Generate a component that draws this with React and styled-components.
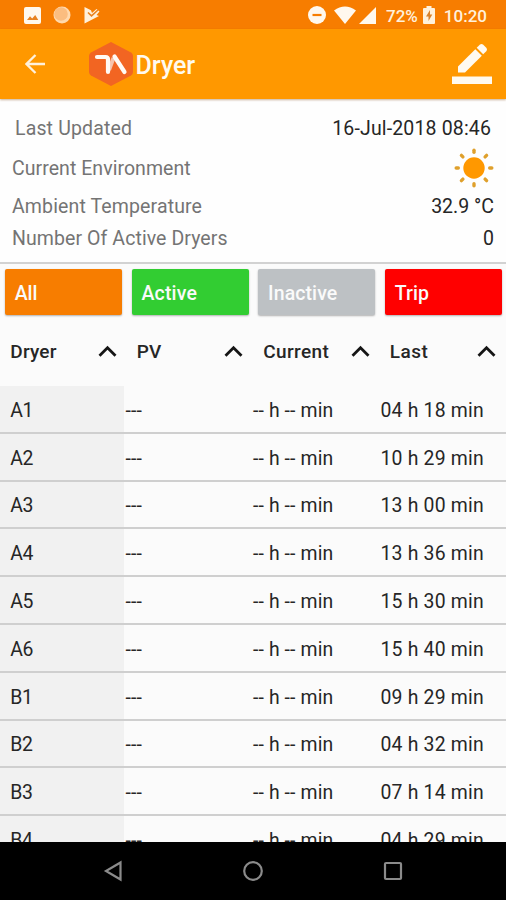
import React from "react";
import styled, { createGlobalStyle } from "styled-components";

const GlobalStyle = createGlobalStyle`
  * { box-sizing: border-box; }
  body { margin: 0; background: #fafafa; font-family: Roboto, "Liberation Sans", sans-serif; }
`;

const Screen = styled.div`
  width: 506px;
  height: 900px;
  display: flex;
  flex-direction: column;
  overflow: hidden;
  background: #fbfbfb;
  color: #262626;
`;

const StatusBar = styled.div`
  height: 29px;
  flex: none;
  display: flex;
  align-items: center;
  justify-content: space-between;
  padding: 1px 19px 0 24px;
  background: #f77d00;
  color: #fff1dc;
`;

const Group = styled.div`
  display: flex;
  align-items: center;
`;

const Icon = styled.svg`
  display: block;
  flex: none;
  margin-left: ${(p) => p.$gap || 0}px;
`;

const StatusText = styled.span`
  font-size: 17px;
  line-height: 20px;
  font-weight: 500;
  margin-top: 1px;
  margin-left: ${(p) => p.$gap}px;
`;

const AppBar = styled.header`
  height: 70px;
  flex: none;
  display: flex;
  align-items: center;
  padding: 0 14px 0 25px;
  background: #ff9800;
  box-shadow: 0 1px 2px rgba(120, 60, 0, 0.4);
  position: relative;
`;

const Title = styled.h1`
  margin: 3px auto 0 2px;
  font-size: 25px;
  font-weight: 500;
  line-height: 30px;
  letter-spacing: 0;
  color: #fffaf0;
`;

const Summary = styled.section`
  height: 165px;
  flex: none;
  display: grid;
  grid-template-rows: 47px 32px 44px 20px;
  padding: 6px 12px 0;
  background: #fefefe;
  border-bottom: 2px solid #d2d2d2;
  font-size: 19.5px;
`;

const SummaryRow = styled.div`
  display: flex;
  align-items: center;
  justify-content: space-between;
  padding: 0 ${(p) => (p.$inset ? 3 : 0)}px;
`;

const Label = styled.span`
  color: #747474;
  letter-spacing: ${(p) => p.$spacing}px;
`;

const Value = styled.span`
  letter-spacing: ${(p) => p.$spacing}px;
`;

const Filters = styled.nav`
  flex: none;
  display: grid;
  grid-template-columns: repeat(4, 117px);
  column-gap: 9.7px;
  padding: 5px 5px 0;
`;

const FilterButton = styled.button`
  height: 46px;
  border: 0;
  border-radius: 2px;
  padding: 2px 0 0 9.7px;
  text-align: left;
  font: 500 19.5px Roboto, "Liberation Sans", sans-serif;
  letter-spacing: ${(p) => p.$spacing}px;
  color: #fafafa;
  background: ${(p) => p.$color};
  box-shadow: 0 1px 2px rgba(0, 0, 0, 0.3);
`;

const Headings = styled.div`
  height: 71px;
  flex: none;
  display: grid;
  grid-template-columns: repeat(4, 126.5px);
`;

const Heading = styled.div`
  display: flex;
  align-items: center;
  justify-content: space-between;
  padding: 2px 9px 0 10.3px;
  font-size: 19px;
  font-weight: 500;
  letter-spacing: ${(p) => p.$spacing}px;
`;

const Rows = styled.div`
  flex: 1;
  min-height: 0;
  overflow: hidden;
`;

const Row = styled.div`
  height: 47.8px;
  display: grid;
  grid-template-columns: 123.5px 129px 128px 1fr;
  border-bottom: 2px solid #cfcfcf;
  font-size: 19.4px;
`;

const Cell = styled.div`
  display: flex;
  align-items: center;
  padding-left: ${(p) => p.$pad}px;
  padding-top: 3px;
  letter-spacing: ${(p) => p.$spacing || 0}px;
  background: ${(p) => (p.$shaded ? "#f1f1f1" : "transparent")};
  white-space: pre;
`;

const NavBar = styled.footer`
  height: 58px;
  flex: none;
  display: flex;
  align-items: center;
  justify-content: space-between;
  padding: 0 103px 1px 103px;
  background: #000;
`;

const LogoMark = () => (
  <Icon width="46" height="46" viewBox="0 0 46 46" $gap={42.5}>
    <path d="M23 1 43 11.500Q45 12.600 45 15V31Q45 33.400 43 34.500L23 45 3 34.500Q1 33.400 1 31V15Q1 12.600 3 11.500Z" fill="#f26522" />
    <path d="M25.500 17 21 29" stroke="#f7c4ac" strokeWidth="4" />
    <path d="M9 16H17.500Q20 16 20 18.500V31M26.500 15.500 36.500 31" fill="none" stroke="#fffaf5" strokeWidth="4.200" strokeLinecap="round" />
  </Icon>
);

const Sun = () => (
  <Icon width="40" height="40" viewBox="-20 -20 40 40">
    <circle r="10.700" fill="#ff9800" />
    <g stroke="#dfa02c" strokeWidth="3.400" strokeLinecap="round">
      {[0, 45, 90, 135, 180, 225, 270, 315].map((a) => (
        <path key={a} d="M0-17.800V-15.700" transform={`rotate(${a})`} />
      ))}
    </g>
  </Icon>
);

const Chevron = () => (
  <Icon width="20" height="14" viewBox="0 0 20 14">
    <path d="M1.500 10.800 9.500 2.700 17.500 10.800" fill="none" stroke="#151515" strokeWidth="2.800" />
  </Icon>
);

const filters = [
  { label: "All", color: "#f77d00", spacing: 0 },
  { label: "Active", color: "#32cd32", spacing: 0.2 },
  { label: "Inactive", color: "#bdc1c4", spacing: 0.1 },
  { label: "Trip", color: "#ff0000", spacing: 0.1 },
];

const headings = [
  { label: "Dryer", spacing: 0.2 },
  { label: "PV", spacing: 0.2 },
  { label: "Current", spacing: 0.35 },
  { label: "Last", spacing: 0.45 },
];

const rows = [
  ["A1", "04 h 18 min"],
  ["A2", "10 h 29 min"],
  ["A3", "13 h 00 min"],
  ["A4", "13 h 36 min"],
  ["A5", "15 h 30 min"],
  ["A6", "15 h 40 min"],
  ["B1", "09 h 29 min"],
  ["B2", "04 h 32 min"],
  ["B3", "07 h 14 min"],
  ["B4", "04 h 29 min"],
];

export default function App() {
  return (
    <Screen>
      <GlobalStyle />
      <StatusBar>
        <Group>
          <Icon width="17" height="17" viewBox="0 0 17 17">
            <rect width="17" height="17" rx="2" fill="#fff8ee" />
            <path d="M3 13 6 9.300 8.200 11.500 11.200 8 14.300 13Z" fill="#e88220" />
          </Icon>
          <Icon width="18" height="18" viewBox="0 0 18 18" $gap={12}>
            <circle cx="9" cy="9" r="8.500" fill="#ffd9ae" />
            <circle cx="8" cy="8" r="6.800" fill="#fbbd80" />
          </Icon>
          <Icon width="17" height="18" viewBox="0 0 17 18" $gap={13}>
            <path d="M0.500 1 7 4.200 8 7 12.500 3 15.500 5.500 12.500 9 15 10 0.500 17.500Z" fill="#fff1dc" />
            <path d="M4 6.500 7.500 9.800 14 4" fill="none" stroke="#e88220" strokeWidth="1.600" />
          </Icon>
        </Group>
        <Group>
          <Icon width="18" height="18" viewBox="0 0 18 18">
            <circle cx="9" cy="9" r="9" fill="#fff8ee" />
            <path d="M4.500 9H13.500" stroke="#f77d00" strokeWidth="2.200" />
          </Icon>
          <Icon width="22" height="18" viewBox="0 0 22 18" $gap={8}>
            <path d="M0 4.500Q11-3.500 22 4.500L11 18Z" fill="#fff8ee" />
          </Icon>
          <Icon width="17" height="17" viewBox="0 0 17 17" $gap={3}>
            <path d="M17 0V17H0Z" fill="#fff8ee" />
          </Icon>
          <StatusText $gap={10}>72%</StatusText>
          <Icon width="12" height="18" viewBox="0 0 12 18" $gap={5}>
            <path d="M3.500 0H8.500V2H11Q12 2 12 3V17Q12 18 11 18H1Q0 18 0 17V3Q0 2 1 2H3.500Z" fill="#fff1dc" />
            <path d="M7 4 3 10.500H5.500V15L9.300 8.500H7Z" fill="#d9822b" />
          </Icon>
          <StatusText $gap={9}>10:20</StatusText>
        </Group>
      </StatusBar>
      <AppBar>
        <Icon width="20" height="20" viewBox="0 0 20 20">
          <path d="M20 10H2M10.500 1 1.500 10 10.500 19" fill="none" stroke="#fff1dc" strokeWidth="2.300" />
        </Icon>
        <LogoMark />
        <Title>Dryer</Title>
        <Icon width="40" height="42" viewBox="0 0 40 42">
          <path d="M6 23.500 23.300 6.200 29.800 12.700 13 29.500H6Z" fill="#fffaf0" />
          <path d="M24.700 4.800 28 1.500Q29.500.500 31 1.500L34.500 5Q35.500 6.500 34.500 8L31.200 11.300Z" fill="#fffaf0" />
          <rect x="0" y="33.500" width="40" height="7.500" fill="#fffaf0" />
        </Icon>
      </AppBar>
      <Summary>
        <SummaryRow $inset>
          <Label $spacing={0.15}>Last Updated</Label>
          <Value $spacing={0.15}>16-Jul-2018 08:46</Value>
        </SummaryRow>
        <SummaryRow>
          <Label $spacing={0.05}>Current Environment</Label>
          <Sun />
        </SummaryRow>
        <SummaryRow>
          <Label $spacing={0.13}>Ambient Temperature</Label>
          <Value $spacing={0}>32.9 °C</Value>
        </SummaryRow>
        <SummaryRow>
          <Label $spacing={0.08}>Number Of Active Dryers</Label>
          <Value $spacing={0}>0</Value>
        </SummaryRow>
      </Summary>
      <Filters>
        {filters.map((f) => (
          <FilterButton key={f.label} $color={f.color} $spacing={f.spacing}>
            {f.label}
          </FilterButton>
        ))}
      </Filters>
      <Headings>
        {headings.map((h) => (
          <Heading key={h.label} $spacing={h.spacing}>
            {h.label}
            <Chevron />
          </Heading>
        ))}
      </Headings>
      <Rows>
        {rows.map(([name, last]) => (
          <Row key={name}>
            <Cell $pad={10.3} $spacing={-0.5} $shaded>{name}</Cell>
            <Cell $pad={2} $spacing={0.2}>---</Cell>
            <Cell $pad={0.5} $spacing={0.12}>-- h -- min</Cell>
            <Cell $pad={0} $spacing={0.2}>{last}</Cell>
          </Row>
        ))}
      </Rows>
      <NavBar>
        <Icon width="20" height="22" viewBox="0 0 20 22">
          <path d="M17.500 2.500V19.500L3 11Z" fill="none" stroke="#8b8b8b" strokeWidth="2.200" />
        </Icon>
        <Icon width="20" height="20" viewBox="0 0 20 20">
          <circle cx="10" cy="10" r="8.800" fill="none" stroke="#8b8b8b" strokeWidth="2.200" />
        </Icon>
        <Icon width="20" height="20" viewBox="0 0 20 20">
          <rect x="2" y="2" width="16" height="16" rx="1" fill="none" stroke="#8b8b8b" strokeWidth="2.200" />
        </Icon>
      </NavBar>
    </Screen>
  );
}
